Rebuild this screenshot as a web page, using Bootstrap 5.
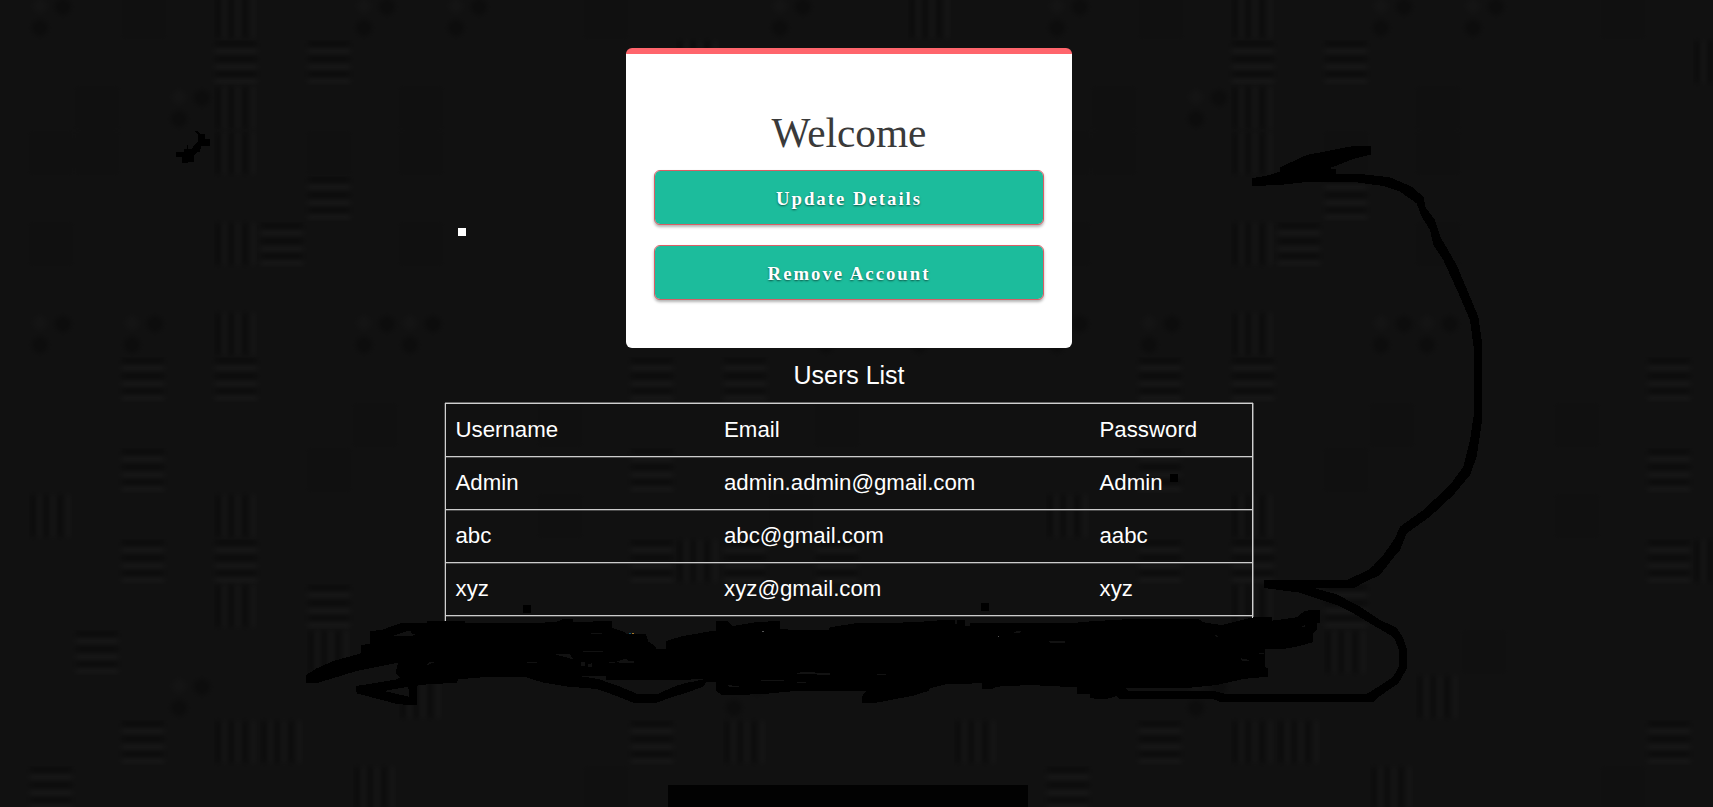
<!DOCTYPE html>
<html lang="en">
<head>
<meta charset="utf-8">
<title>Welcome</title>
<link href="https://cdn.jsdelivr.net/npm/bootstrap@5.3.0/dist/css/bootstrap.min.css" rel="stylesheet">
<script src="https://cdn.jsdelivr.net/npm/bootstrap@5.3.0/dist/js/bootstrap.bundle.min.js"></script>
<style>
  html, body { height: 807px; overflow: hidden; }
  body { background: #111; color: #fff; font-family: "Liberation Sans", Arial, sans-serif; }
  .page { width: 1698px; height: 807px; padding-top: 48px; z-index: 1; }
  .welcome { width: 446px; height: 300px; background: #fff; border-top: 6px solid #ff656c; border-radius: 6px; padding: 55px 28px 0; font-family: "Liberation Serif", "Times New Roman", serif; }
  .welcome h1 { font-size: 41.3px; line-height: 48px; font-weight: 400; color: #3a3a3a; margin: 0 0 13px; }
  .btn-act { height: 55px; margin-bottom: 20px; border: 1px solid #d95e66; border-radius: 6px; background: #1cbc9c; background-clip: padding-box; color: #fff; font-family: inherit; font-weight: 700; font-size: 18.8px; letter-spacing: 1.98px; text-shadow: 0 1px 2px rgba(0,0,0,.55); box-shadow: 0 2px 3px rgba(0,0,0,.3); padding: 4px 0 0; }
  .list-title { font-size: 25px; line-height: 30px; font-weight: 400; margin: 12px 0 13px; }
  .users { width: 808px; table-layout: fixed; border-collapse: separate; border-spacing: 0; border: 1px solid #d0d0d0; border-bottom: 0; box-shadow: -1px 0 #444, 1px 0 #666, 0 -1px #666; font-size: 22.25px; line-height: 26px; }
  .users td { height: 53px; padding: 0 0 1px 9.5px; border-bottom: 1px solid #ccc; box-shadow: 0 1px #4a4a4a; }
  .users tr:last-child td { height: 5px; border: 0; padding: 0; box-shadow: none; }
  .layer { left: 0; top: 0; pointer-events: none; }
  .ink { z-index: 2; }
</style>
</head>
<body class="position-relative m-0">

<!-- woven backdrop -->
<svg class="layer position-absolute" width="1713" height="807">
  <defs>
    <filter id="soft" color-interpolation-filters="sRGB"><feGaussianBlur stdDeviation="2.5"/></filter>
    <g id="h" filter="url(#soft)"><path d="M2 5H44M2 20H44M2 35H44" stroke="#060606" stroke-width="6"/><path d="M2 12H44M2 28H44M2 42H44" stroke="#222" stroke-width="4"/></g>
    <g id="v" filter="url(#soft)"><path d="M5 2V44M18 2V44M32 2V44" stroke="#070707" stroke-width="6"/><path d="M12 2V44M25 2V44M40 2V44" stroke="#1c1c1c" stroke-width="4"/></g>
    <g id="d" filter="url(#soft)"><rect x="2" y="2" width="42" height="42" fill="#0e0e0e"/></g>
    <g id="s" filter="url(#soft)"><circle cx="12" cy="34" r="8" fill="#080808"/><circle cx="35" cy="13" r="8" fill="#080808"/><circle cx="12" cy="12" r="7" fill="#171717"/></g>
    <pattern id="weave" width="1017" height="816" patternUnits="userSpaceOnUse" x="-18" y="-6">
      <use href="#s" x="46"/><use href="#d" x="139"/><use href="#v" x="231"/><use href="#s" x="370"/><use href="#s" x="462"/><use href="#d" x="601"/><use href="#s" x="786"/><use href="#v" x="925"/>
      <use href="#h" x="231" y="45"/><use href="#h" x="324" y="45"/><use href="#d" x="92" y="91"/><use href="#s" x="185" y="91"/><use href="#v" x="231" y="91"/><use href="#d" x="416" y="91"/><use href="#v" x="693" y="45"/><use href="#d" x="832" y="91"/>
      <use href="#v" x="231" y="136"/><use href="#d" x="46" y="136"/><use href="#d" x="324" y="136"/><use href="#d" x="416" y="136"/><use href="#d" x="92" y="136"/><use href="#h" x="324" y="181"/><use href="#h" x="277" y="227"/><use href="#v" x="231" y="227"/><use href="#d" x="46" y="227"/><use href="#d" x="416" y="227"/><use href="#d" x="786" y="227"/>
      <use href="#s" x="46" y="317"/><use href="#v" x="231" y="317"/><use href="#s" x="370" y="317"/><use href="#s" x="416" y="317"/><use href="#s" x="138" y="317"/><use href="#s" x="832" y="317"/><use href="#s" x="925" y="317"/>
      <use href="#h" x="138" y="362"/><use href="#h" x="231" y="362"/><use href="#h" x="647" y="362"/><use href="#h" x="740" y="362"/><use href="#d" x="555" y="408"/><use href="#d" x="370" y="408"/><use href="#d" x="832" y="408"/>
      <use href="#h" x="138" y="453"/><use href="#h" x="647" y="453"/><use href="#d" x="324" y="453"/><use href="#v" x="46" y="499"/><use href="#v" x="231" y="499"/><use href="#d" x="786" y="499"/><use href="#d" x="555" y="499"/>
      <use href="#h" x="138" y="544"/><use href="#h" x="231" y="544"/><use href="#h" x="647" y="544"/><use href="#v" x="693" y="544"/><use href="#h" x="740" y="544"/><use href="#h" x="832" y="544"/>
      <use href="#v" x="231" y="589"/><use href="#h" x="92" y="635"/><use href="#v" x="324" y="635"/><use href="#h" x="324" y="589"/><use href="#s" x="185" y="680"/><use href="#d" x="462" y="635"/><use href="#v" x="416" y="680"/><use href="#s" x="740" y="680"/>
      <use href="#h" x="138" y="725"/><use href="#v" x="231" y="725"/><use href="#v" x="277" y="725"/><use href="#h" x="647" y="725"/><use href="#v" x="740" y="725"/><use href="#v" x="971" y="725"/><use href="#h" x="46" y="771"/><use href="#v" x="370" y="771"/><use href="#d" x="601" y="771"/>
    </pattern>
  </defs>
  <rect width="1713" height="807" fill="url(#weave)" opacity=".5"/>
  <rect x="668" y="785" width="360" height="22" fill="#020202"/>
</svg>

<main class="page position-relative d-flex flex-column align-items-center">
  <section class="welcome d-flex flex-column flex-shrink-0 text-center">
    <h1>Welcome</h1>
    <button type="button" class="btn btn-act w-100">Update Details</button>
    <button type="button" class="btn btn-act w-100">Remove Account</button>
  </section>
  <h2 class="list-title">Users List</h2>
  <table class="users">
    <colgroup><col style="width:268.5px"><col style="width:375.5px"><col></colgroup>
    <tbody>
      <tr><td>Username</td><td>Email</td><td>Password</td></tr>
      <tr><td>Admin</td><td>admin.admin@gmail.com</td><td>Admin</td></tr>
      <tr><td>abc</td><td>abc@gmail.com</td><td>aabc</td></tr>
      <tr><td>xyz</td><td>xyz@gmail.com</td><td>xyz</td></tr>
      <tr><td></td><td></td><td></td></tr>
    </tbody>
  </table>
</main>

<!-- freehand marks drawn over the page -->
<svg class="layer ink position-absolute" width="1713" height="807" shape-rendering="crispEdges">
  <g transform="translate(290 590) scale(.33333)">
    <path d="M48 255 80 235 130 213 213 190V165L240 162V123L275 120 330 100 412 98V93H525V100H730L800 95 820 87H850V97H910V92H965V113L1002 125 1010 132H1068L1075 155 1095 168 1100 178 1128 176V153L1165 142 1202 138V270H948V257H860L925 267 990 290 1045 313H1100L1160 287 1202 275V303L1150 320 1100 338H1030L980 318 920 297 835 290 760 278 708 262 600 260 505 268 500 278 385 285 380 290V345L325 343 200 310 198 288 250 280 320 268 330 262 318 250 320 232 325 218 200 243 85 278H48Z"/>
    <path fill="#111" d="M282 303 355 290 357 320ZM312 137 345 125 363 123 365 131 378 134 360 139ZM795 193H840L850 208 835 204ZM410 227 418 216H438L425 220ZM872 217H884V229H875ZM893 222 905 220V230H895ZM975 217 990 211 1010 206 1015 213 1032 214V218H1000ZM904 129H935V132H904ZM880 183H940V186H880ZM711 216H741V219H711ZM956 215H974V220H960Z"/>
    <path fill="#16566b" d="M1017 129h5v4h-5z"/><path fill="#a87825" d="M1026 129h5v4h-5z"/>
  </g>
  <g transform="translate(680 590) scale(.33333)">
    <path d="M0 140 100 122H107V94H145L158 108 230 96 300 93V117L345 120H445L450 112 525 100 700 97 790 90H825V103H831V90H855V107H870V99H1202V312H1190V292L1050 285 950 290 935 297H907L905 280 800 282 750 295 745 303 700 317 590 338H547V318L558 303H345L240 313 125 315 108 303V275L78 277 70 290 0 315V285L70 268H0Z"/>
    <path fill="#121212" d="M350 249 370 246H405V249H450V254H410V251H350ZM242 270H312V273H242ZM350 276H378V279H350ZM590 252H618V255H590ZM143 286H155V289H177V291H150ZM1107 154H1155V158H1112ZM1002 126 1018 122H1026L1018 129H1002Z"/>
    <path fill="#555" d="M246 123h5v3h-5zM954 138h3v3h-3z"/>
  </g>
  <g transform="translate(1070 560) scale(.33333)">
    <path d="M0 190 50 185 180 177H385L400 187 455 195 550 172 606 170V182L680 172 705 152 750 150V188H740V210L728 220V247L680 260 640 267H585V322L594 325V350L520 357 440 375 350 384H165L175 393H430L470 402H890L925 380 970 350 987 318V270L975 240 960 225 900 190 850 160 800 135 690 98 583 84V60H830L890 35 918 10 925 0H965L930 45 850 82 735 85 800 103 870 140 930 180 980 203 1000 235 1011 270V325L985 370 930 408 910 426H450L430 417H150L140 408 110 417 60 415V402H22V382H0Z"/>
    <path fill="#111" d="M513 295 530 297 538 302 517 304ZM696 199 707 195 703 203ZM434 226 447 227 440 231ZM567 280H582V283H567Z"/>
  </g>
  <g transform="translate(1230 120) scale(.33333)">
    <path d="M66 175 120 165 150 155V142L230 105 370 78H423V104L375 115 298 145 318 147V162L400 163 480 172 545 200 582 232 585 260 615 300 632 352 680 435 720 530 745 590 755 660V910L740 1010 720 1065 670 1125 600 1190 530 1240 510 1290 450 1360 375 1403H102V1380H350L420 1348 460 1305 495 1255 510 1220 580 1170 660 1095 700 1040 720 960 732 880V690L720 600 690 530 640 420 610 375 600 330 575 290 560 250 510 215 460 198 380 187H220L150 195 66 198Z"/>
  </g>
  <path d="M194 131h4l2 3h5v5h5v7h-9l-1 6h-3l-3 4v6h-4l-5 1h-3v-6h-6v-5h8v-3h3v-4h1v4h4l2-4 4-3v-7l-1-2z"/>
  <path d="M523 605h8v8h-8zM981 603h8v8h-8zM1170 474h8v8h-8z"/>
  <path fill="#fff" d="M458 228h8v8h-8z"/>
</svg>
</body>
</html>
